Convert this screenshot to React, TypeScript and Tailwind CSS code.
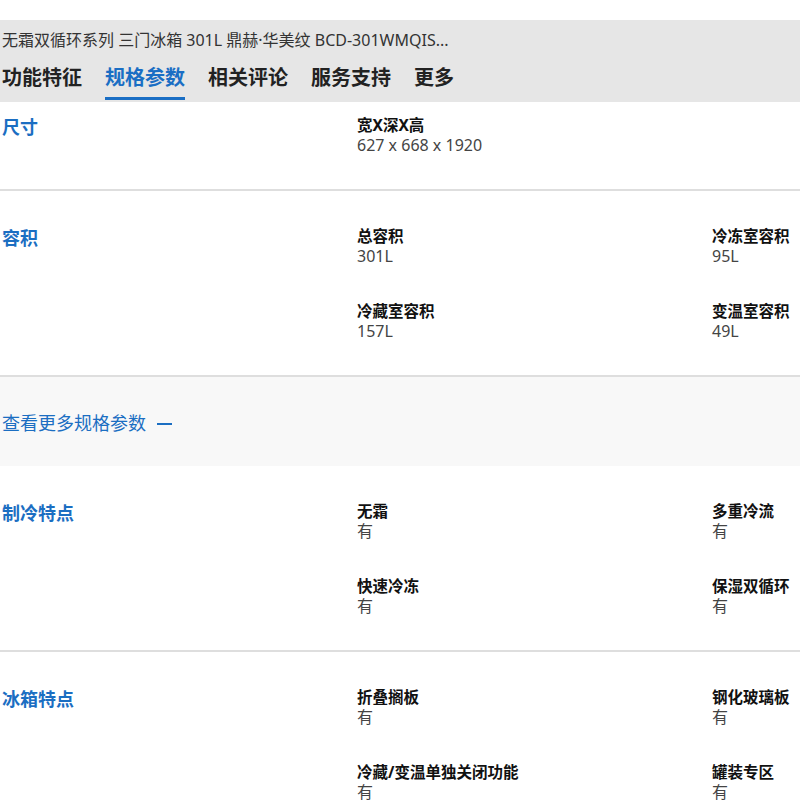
import React from "react";

type Item = { label: string; value: string };
type Section = { title: string; items: Item[] };

const TABS = ["功能特征", "规格参数", "相关评论", "服务支持", "更多"];

const TOP: Section[] = [
  { title: "尺寸", items: [{ label: "宽X深X高", value: "627 x 668 x 1920" }] },
  {
    title: "容积",
    items: [
      { label: "总容积", value: "301L" },
      { label: "冷冻室容积", value: "95L" },
      { label: "冷藏室容积", value: "157L" },
      { label: "变温室容积", value: "49L" },
    ],
  },
];

const MORE: Section[] = [
  {
    title: "制冷特点",
    items: [
      { label: "无霜", value: "有" },
      { label: "多重冷流", value: "有" },
      { label: "快速冷冻", value: "有" },
      { label: "保湿双循环", value: "有" },
    ],
  },
  {
    title: "冰箱特点",
    items: [
      { label: "折叠搁板", value: "有" },
      { label: "钢化玻璃板", value: "有" },
      { label: "冷藏/变温单独关闭功能", value: "有" },
      { label: "罐装专区", value: "有" },
    ],
  },
];

function SpecSection({ s, first }: { s: Section; first?: boolean }) {
  return (
    <div className={`border-b-2 border-[#dedede] pb-[34px] ${first ? "pt-[13px]" : "pt-[35px]"}`}>
      <div className="grid grid-cols-[355px_710px] pl-[2px]">
        <h3 className="text-[18px] leading-[24px] font-bold text-[#1b6ec2]">{s.title}</h3>
        <div className="grid grid-cols-[355px_355px] gap-y-[35px]">
          {s.items.map((it) => (
            <div key={it.label} className="flex flex-col">
              <span className="text-[15.5px] leading-[20px] font-bold text-[#111]">{it.label}</span>
              <span className="text-[16px] leading-[20px] text-[#444]">{it.value}</span>
            </div>
          ))}
        </div>
      </div>
    </div>
  );
}

export default function App() {
  return (
    <div
      className="w-[800px] h-[800px] overflow-hidden bg-white pt-[20px]"
      style={{ fontFamily: '"Noto Sans", "Noto Sans CJK SC", sans-serif' }}
    >
      <div className="w-[1065px]">
        {/* Header */}
        <div className="bg-[#e6e6e6] h-[82px] pl-[2px]">
          <div className="pt-[8px] text-[16px] leading-[24px] text-[#333] whitespace-nowrap">
            无霜双循环系列 三门冰箱 301L 鼎赫·华美纹 BCD-301WMQIS...
          </div>
          <div className="flex gap-[23px] mt-[12px]">
            {TABS.map((t, i) => (
              <div key={t} className="flex flex-col">
                <span className={`text-[20px] leading-[28px] font-bold ${i === 1 ? "text-[#1a6ec4]" : "text-[#222]"}`}>{t}</span>
                <span className={`mt-[5px] h-[3px] ${i === 1 ? "bg-[#1a6ec4]" : "bg-transparent"}`} />
              </div>
            ))}
          </div>
        </div>

        {TOP.map((s, i) => (
          <SpecSection key={s.title} s={s} first={i === 0} />
        ))}

        {/* Show more */}
        <div className="bg-[#f8f8f8] h-[89px] flex items-center pl-[2px] pt-[4px]">
          <span className="text-[18px] text-[#1b6ec2]">查看更多规格参数</span>
          <span className="ml-[11px] w-[15px] h-[2px] bg-[#1b6ec2]" />
        </div>

        {MORE.map((s) => (
          <SpecSection key={s.title} s={s} />
        ))}
      </div>
    </div>
  );
}
